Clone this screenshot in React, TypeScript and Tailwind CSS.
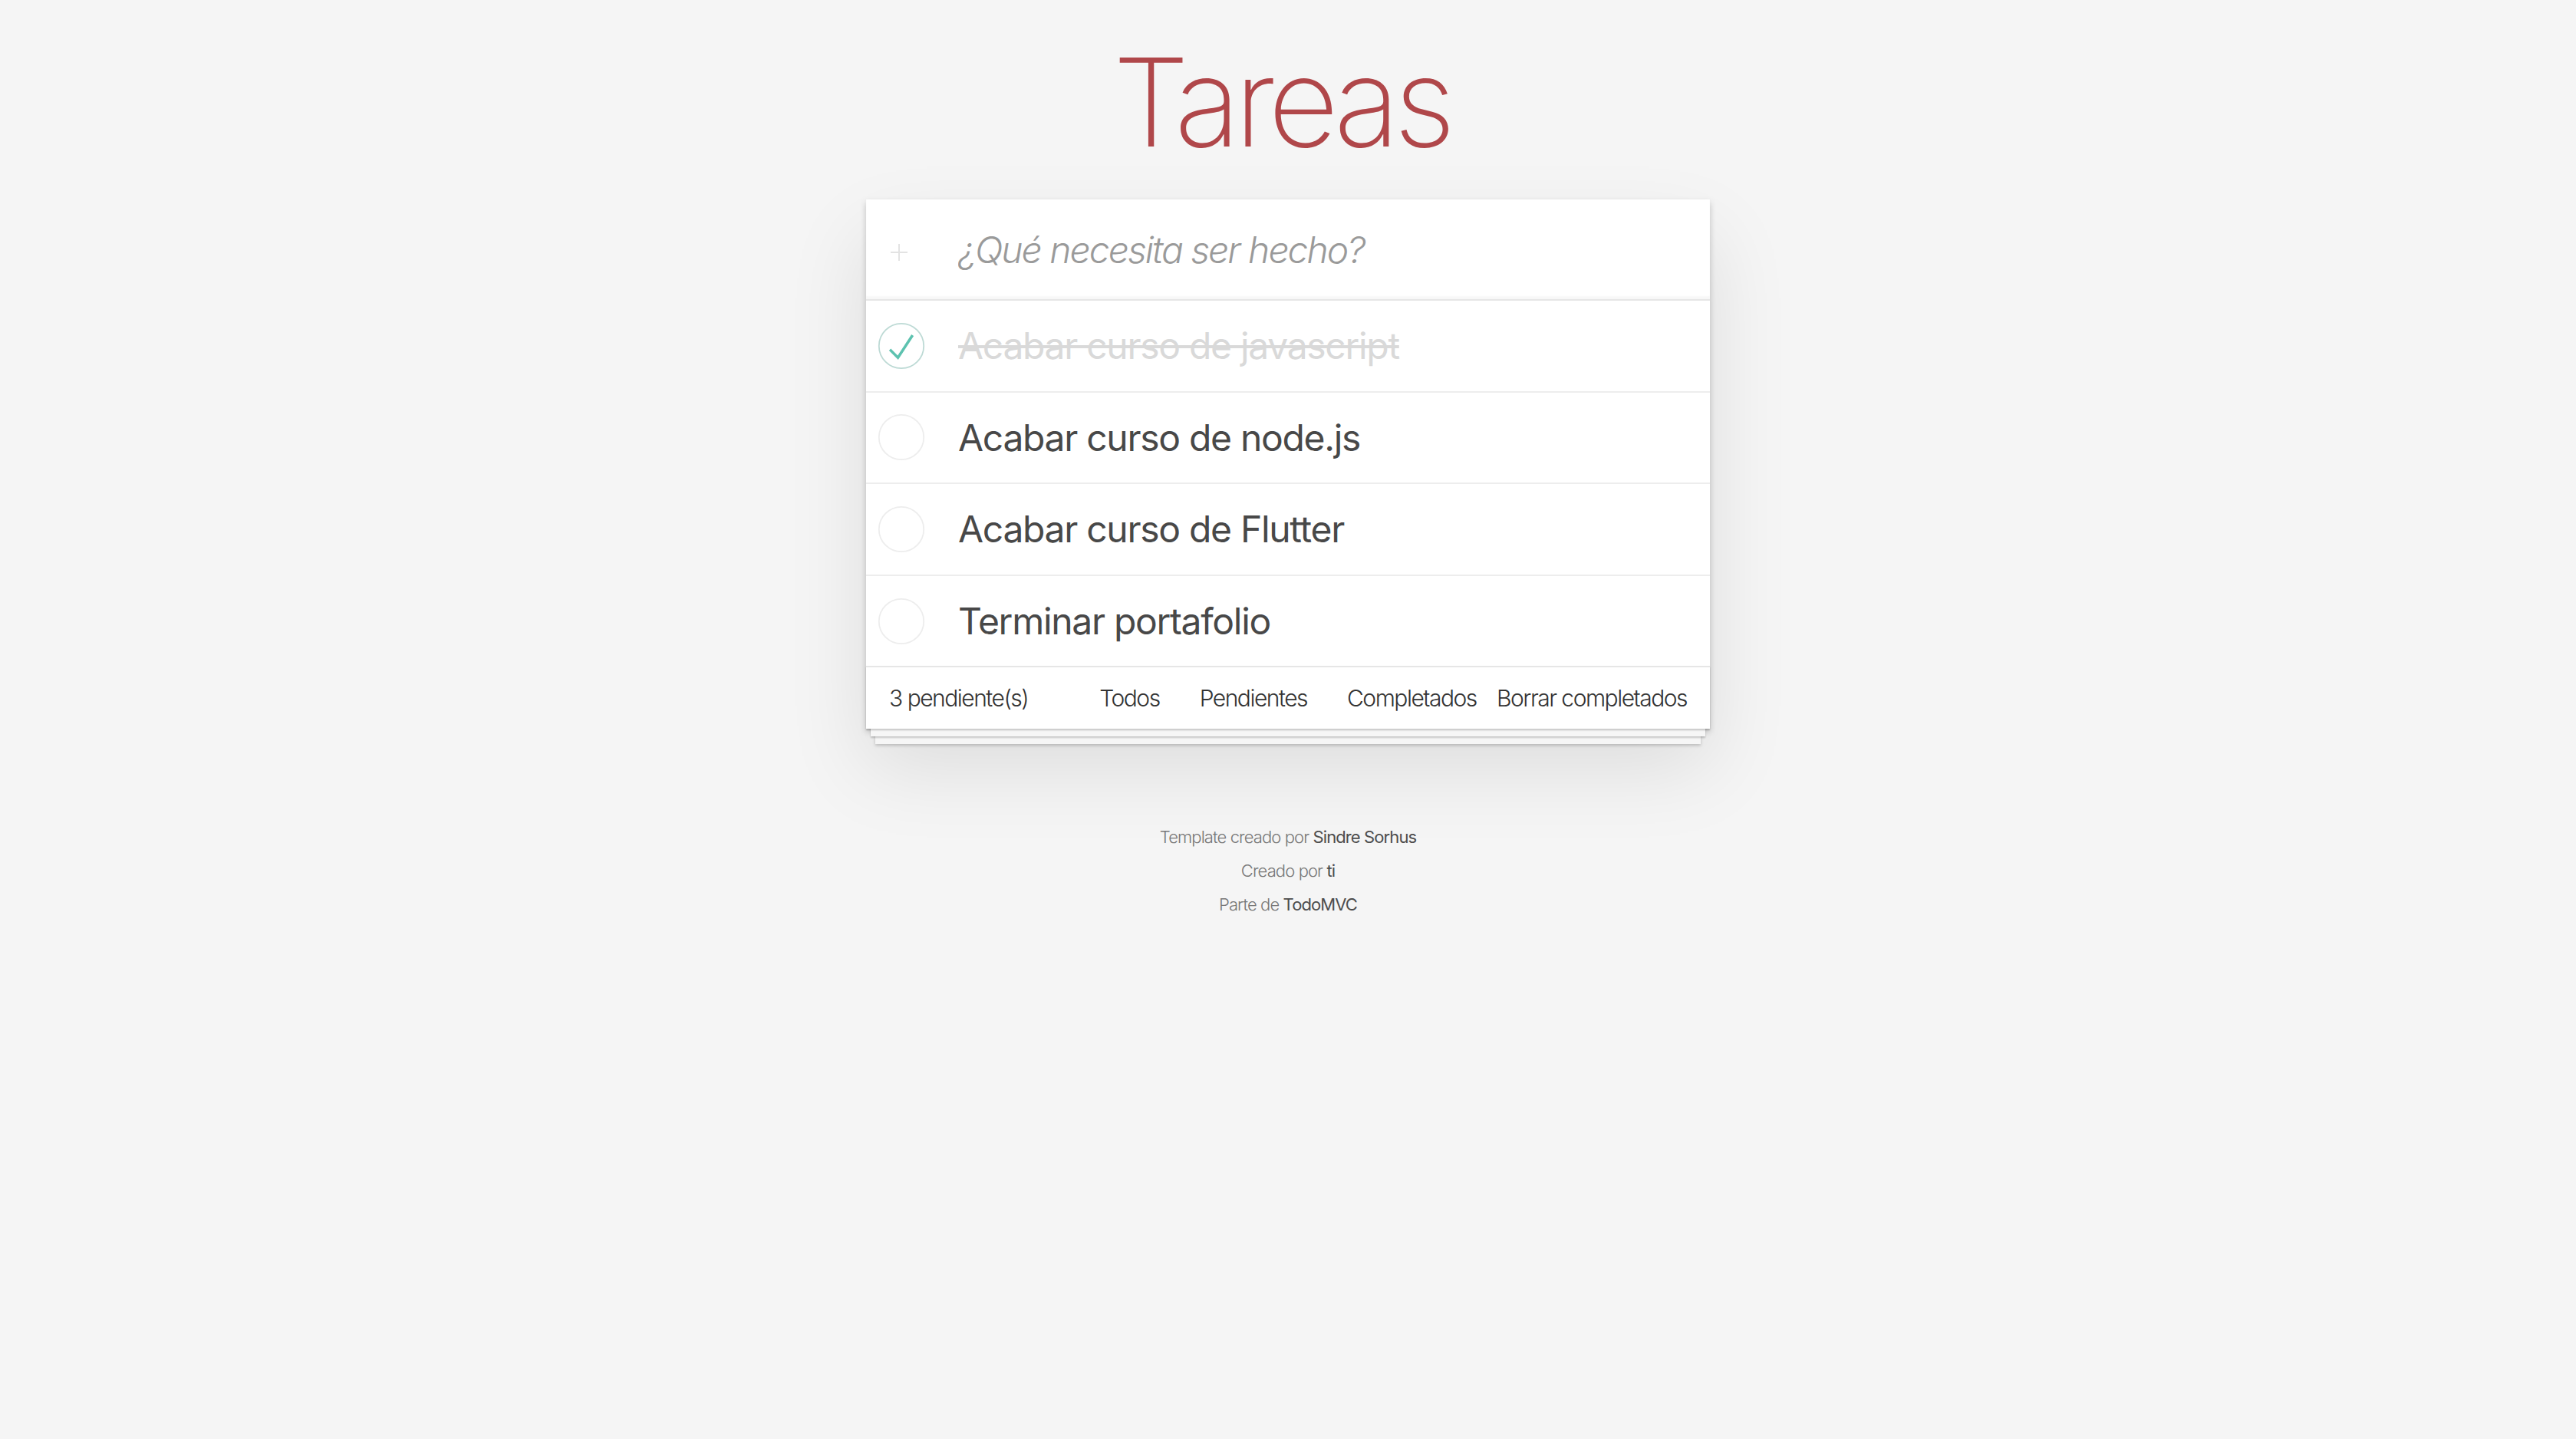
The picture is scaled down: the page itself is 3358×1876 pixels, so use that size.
import React from 'react';

interface Todo {
  id: number;
  title: string;
  completed: boolean;
}

const todos: Todo[] = [
  { id: 1, title: 'Acabar curso de javascript', completed: true },
  { id: 2, title: 'Acabar curso de node.js', completed: false },
  { id: 3, title: 'Acabar curso de Flutter', completed: false },
  { id: 4, title: 'Terminar portafolio', completed: false },
];

function Toggle({ checked }: { checked: boolean }) {
  return (
    <svg width="62" height="62" viewBox="-2 -2 104 104" className="shrink-0">
      <circle
        cx="50"
        cy="50"
        r="49"
        fill="none"
        stroke={checked ? '#bddad5' : '#ededed'}
        strokeWidth="3"
      />
      {checked && <path fill="#5dc2af" d="M72 25L42 71 27 56l-4 4 20 20 34-52z" />}
    </svg>
  );
}

export default function App() {
  const pending = todos.filter(t => !t.completed).length;

  return (
    <div className="min-h-screen bg-[#f5f5f5] pt-[53px] font-['Inter','Liberation_Sans',sans-serif] text-[#111]">
      <div className="mx-auto w-[1100px]">
        <h1 className="mb-[47px] pr-[18px] text-center text-[160px] leading-[160px] font-extralight tracking-[-8px] text-[#b0474a]">
          Tareas
        </h1>

        <section className="bg-white shadow-[0_4px_8px_0_rgba(0,0,0,0.2),0_50px_100px_0_rgba(0,0,0,0.1)]">
          <header className="flex h-[130px] items-center shadow-[inset_0_-4px_2px_rgba(0,0,0,0.03)]">
            <div className="flex w-[120px] shrink-0 items-center pl-[32px] pt-[8px]">
              <svg width="22" height="22" viewBox="0 0 22 22">
                <path d="M11 0v22M0 11h22" stroke="#e3e3e3" strokeWidth="2" />
              </svg>
            </div>
            <input
              className="flex-1 bg-transparent pr-[32px] text-[48px] leading-[67px] font-light tracking-[-2px] text-[#4d4d4d] outline-none placeholder:italic placeholder:font-light placeholder:text-[#9a9a9a]"
              placeholder="¿Qué necesita ser hecho?"
            />
          </header>

          <ul className="border-t-2 border-[#e6e6e6]">
            {todos.map((todo, i) => (
              <li
                key={todo.id}
                className={`flex items-center ${i < todos.length - 1 ? 'border-b-2 border-[#ededed]' : ''}`}
              >
                <div className="flex w-[120px] shrink-0 items-center pl-[15px]">
                  <Toggle checked={todo.completed} />
                </div>
                <label
                  className={`py-[30px] text-[48px] leading-[1.2] font-normal tracking-[-1.3px] ${
                    todo.completed ? 'text-[#d9d9d9] line-through' : 'text-[#484848]'
                  }`}
                >
                  {todo.title}
                </label>
              </li>
            ))}
          </ul>

          <footer className="grid h-[82px] grid-cols-[1fr_auto_1fr] items-center whitespace-nowrap border-t-2 border-[#e6e6e6] px-[30px] text-[30px] leading-[40px] font-light tracking-[-1.5px] text-[#333] shadow-[0_2px_2px_rgba(0,0,0,0.2),0_16px_0_-6px_#f6f6f6,0_18px_2px_-6px_rgba(0,0,0,0.2),0_32px_0_-12px_#f6f6f6,0_34px_4px_-12px_rgba(0,0,0,0.2)]">
            <span className="justify-self-start">{pending} pendiente(s)</span>
            <ul className="flex gap-[8px]">
              <li><a className="mx-[6px] rounded-[6px] border-2 border-transparent px-[14px] py-[6px]">Todos</a></li>
              <li><a className="mx-[6px] rounded-[6px] border-2 border-transparent px-[14px] py-[6px]">Pendientes</a></li>
              <li><a className="mx-[6px] rounded-[6px] border-2 border-transparent px-[14px] py-[6px]">Completados</a></li>
            </ul>
            <button className="justify-self-end">Borrar completados</button>
          </footer>
        </section>

        <div className="mt-[130px] space-y-[22px] text-center text-[22px] leading-[22px] font-light tracking-[-0.9px] text-[#777]">
          <p>
            Template creado por <a className="font-normal text-[#4d4d4d]">Sindre Sorhus</a>
          </p>
          <p>
            Creado por <a className="font-normal text-[#4d4d4d]">ti</a>
          </p>
          <p>
            Parte de <a className="font-normal text-[#4d4d4d]">TodoMVC</a>
          </p>
        </div>
      </div>
    </div>
  );
}
